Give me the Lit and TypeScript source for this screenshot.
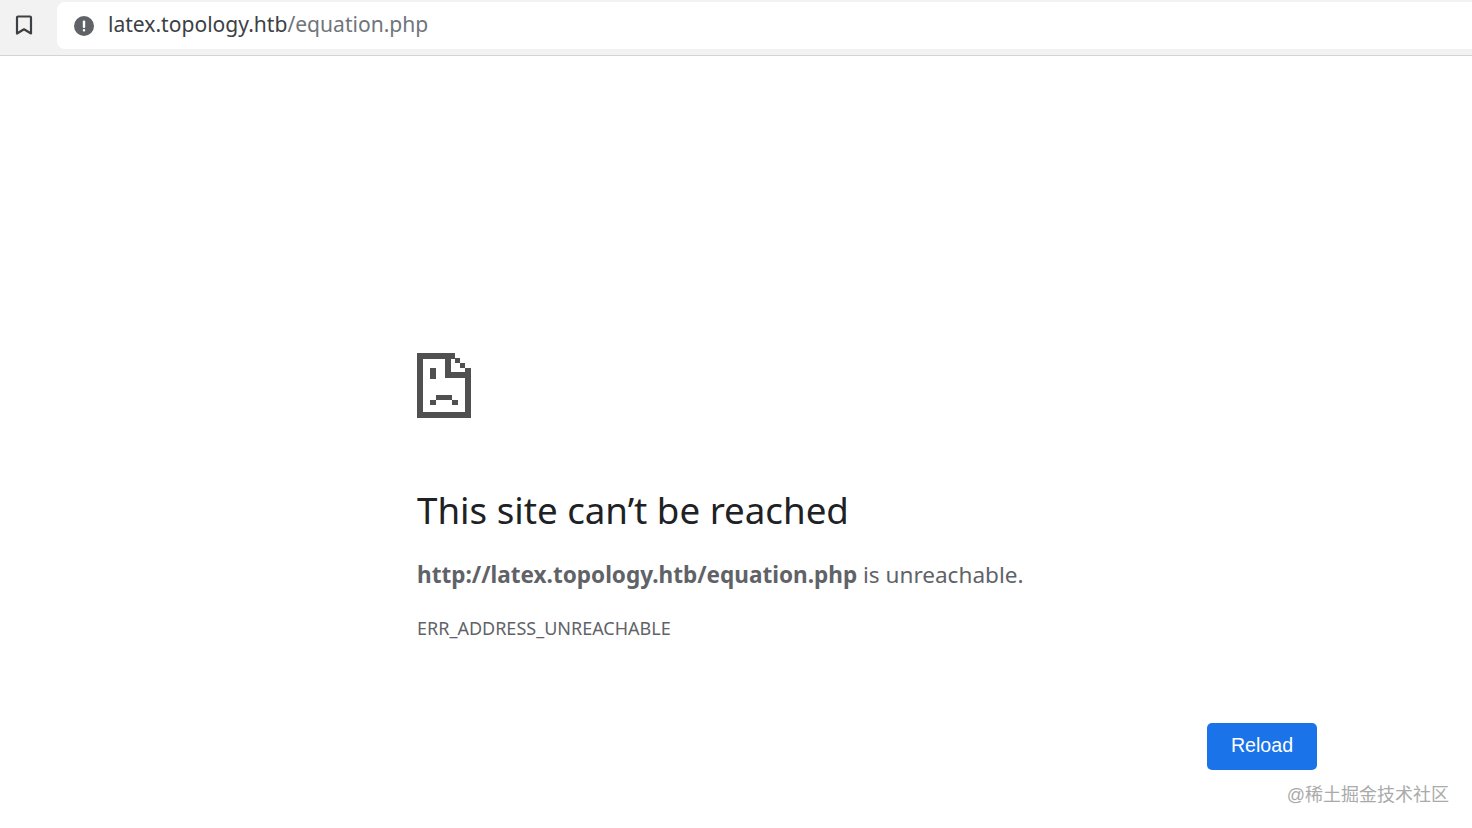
import { LitElement, html, css } from "lit";
import { customElement } from "lit/decorators.js";

@customElement("app-root")
export class AppRoot extends LitElement {
  static styles = css`
    :host { display: block; width: 1472px; height: 828px; overflow: hidden; background: #fff; font-family: "Noto Sans", "Open Sans", sans-serif; }
    .toolbar { box-sizing: border-box; height: 56px; background: #f2f2f2; border-bottom: 1px solid #d4d4d4; display: flex; align-items: flex-start; padding-top: 2px; }
    .bookmark { width: 57px; height: 45px; display: flex; align-items: center; justify-content: center; flex: none; padding-right: 9px; box-sizing: border-box; }
    .omnibox { flex: 1; height: 47px; background: #fff; border-radius: 8px 0 0 8px; display: flex; align-items: center; padding-left: 17px; gap: 14px; }
    .url { font-size: 21.07px; color: #3c4043; line-height: 44px; height: 47px; white-space: nowrap; }
    .url span { color: #70757a; }
    .main { position: relative; height: 772px; box-sizing: border-box; padding: 297px 0 0 417px; display: flex; flex-direction: column; align-items: flex-start; }
    .sad { display: block; }
    h1 { margin: 69px 0 0; font-size: 36.7px; line-height: 46px; font-weight: 400; color: #202124; }
    .msg { margin: 25px 0 0; font-size: 22.55px; line-height: 34px; color: #5f6368; white-space: nowrap; }
    .msg b { font-weight: 700; }
    .code { margin: 23px 0 0; font-size: 18px; line-height: 26px; color: #5f6368; }
    .actions { align-self: stretch; display: flex; justify-content: flex-end; padding-right: 155px; margin-top: 82px; }
    button { width: 110px; height: 47px; border: 0; border-radius: 5px; background: #1a73e8; color: #fff; font: 400 19.6px "Liberation Sans", Arial, sans-serif; padding: 0 0 2px; }
    .mark { position: absolute; right: 23px; bottom: 21px; font-size: 18px; line-height: 24px; color: #aaa; font-family: "Liberation Sans", "Noto Sans CJK SC", sans-serif; white-space: nowrap; }
  `;
  render() {
    return html`
      <div class="toolbar">
        <div class="bookmark">
          <svg width="18" height="20" viewBox="0 0 18 20"><path d="M3 1.5h12a1 1 0 0 1 1 1v16l-7-4.2-7 4.2v-16a1 1 0 0 1 1-1z" fill="none" stroke="#3c4043" stroke-width="2.2" stroke-linejoin="round"/></svg>
        </div>
        <div class="omnibox">
          <svg width="20" height="20" viewBox="0 0 20 20"><circle cx="10" cy="10" r="10" fill="#5f6368"/><rect x="8.8" y="4.5" width="2.4" height="7.5" rx="1" fill="#fff"/><rect x="8.8" y="13" width="2.4" height="2.4" rx="1" fill="#fff"/></svg>
          <div class="url">latex.topology.htb<span>/equation.php</span></div>
        </div>
      </div>
      <div class="main">
        <svg class="sad" width="54" height="65" viewBox="0 0 54 65" shape-rendering="crispEdges" fill="#505050">
          <path d="M0 0h38v6H0zM0 6h6v53H0zM0 59h54v6H0zM48 25h6v34h-6zM28 6h6v13h-6zM28 19h26v6H28z"/>
          <path d="M38 5h5v5h-5zM43 10h5v5h-5zM48 15h6v4h-6z"/>
          <path d="M13 15h6v11h-6zM19 42h16v5H19zM13 47h6v5h-6zM35 47h6v5h-6z"/>
        </svg>
        <h1>This site can’t be reached</h1>
        <p class="msg"><b>http://latex.topology.htb/equation.php</b> is unreachable.</p>
        <div class="code">ERR_ADDRESS_UNREACHABLE</div>
        <div class="actions"><button>Reload</button></div>
        <div class="mark">@稀土掘金技术社区</div>
      </div>
    `;
  }
}
